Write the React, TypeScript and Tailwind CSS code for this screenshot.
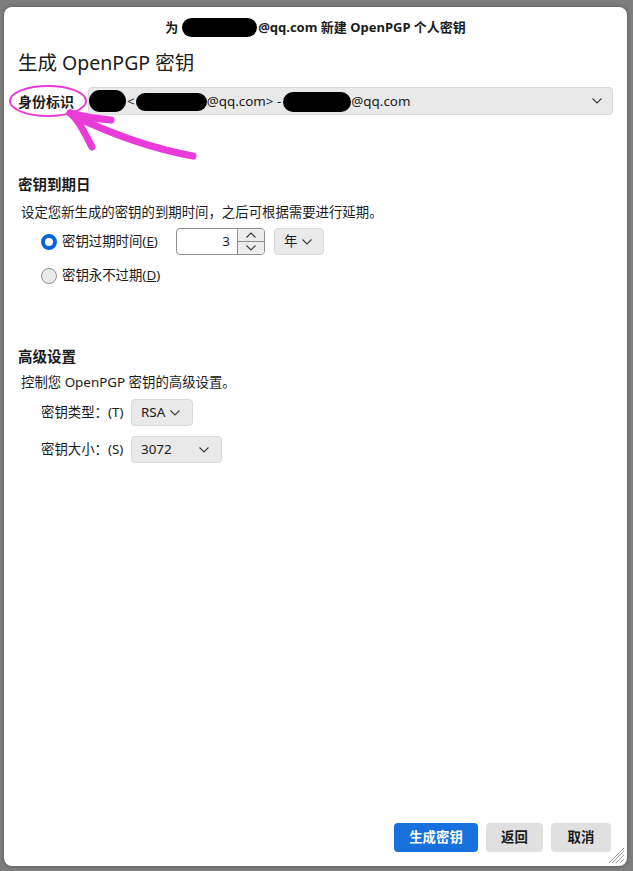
import React from "react";

function Chevron({ className = "" }: { className?: string }) {
  return (
    <svg width="10" height="6" viewBox="0 0 10 6" className={className}>
      <path d="M0.5 0.5 L5 5 L9.5 0.5" fill="none" stroke="#3a3a3a" strokeWidth="1.1" />
    </svg>
  );
}

function Blob({ w, h }: { w: number; h: number }) {
  return (
    <span
      className="inline-block rounded-full bg-black align-middle"
      style={{ width: w, height: h }}
    />
  );
}

export default function App() {
  return (
    <div className="relative h-[871px] w-[633px] overflow-hidden bg-[#7e7e7e] pb-[5px] pl-[4px] pr-[6px] pt-[7px] font-['Noto_Sans','Noto_Sans_CJK_SC',sans-serif] text-[13.4px] text-[#1b1b1b]">
      <div className="relative flex h-full flex-col rounded-[8px] bg-white shadow-[0_0_4px_rgba(0,0,0,0.35)]">
        {/* title bar */}
        <div className="flex h-[40px] items-center justify-center text-[13px] font-bold leading-[20px]">
          <span>为</span>
          <span className="ml-[4px] mr-[1px]">
            <Blob w={75} h={19} />
          </span>
          <span>@qq.com 新建 OpenPGP 个人密钥</span>
        </div>

        <div className="flex flex-1 flex-col px-[14px]">
          <h1 className="mt-[3px] text-[19.5px] font-normal leading-[26px]">生成 OpenPGP 密钥</h1>

          {/* identity */}
          <div className="mt-[11px] flex items-center">
            <span className="w-[70px] text-[14px] font-bold">身份标识</span>
            <div className="flex h-[28px] flex-1 items-center rounded-[4px] border border-[#d9d9d9] bg-[#e9e9e9] pr-[10px]">
              <Blob w={37} h={22} />
              <span className="ml-[1px]">&lt;</span>
              <span className="ml-[1px]">
                <Blob w={71} h={18} />
              </span>
              <span>@qq.com&gt; - </span>
              <span className="ml-[2px]">
                <Blob w={68} h={20} />
              </span>
              <span>@qq.com</span>
              <Chevron className="ml-auto" />
            </div>
          </div>

          {/* expiry */}
          <h2 className="mt-[59px] text-[14.5px] font-bold leading-[20px]">密钥到期日</h2>
          <p className="mt-[8px] pl-[3px] leading-[20px]">设定您新生成的密钥的到期时间，之后可根据需要进行延期。</p>

          <div className="mt-[6px] flex h-[27px] items-center pl-[23px]">
            <span className="h-[16px] w-[16px] rounded-full border-[4.5px] border-[#0b63d9] bg-white" />
            <span className="ml-[5px] w-[114px]">
              密钥过期时间(<span className="underline">E</span>)
            </span>
            <div className="flex h-[27px] w-[89px] overflow-hidden rounded-[4px] border border-[#8f8f8f] bg-white">
              <div className="flex flex-1 items-center justify-end pr-[7px]">3</div>
              <div className="flex w-[27px] flex-col border-l border-[#8f8f8f]">
                <div className="flex flex-1 items-center justify-center border-b border-[#8f8f8f] bg-[#ececec]">
                  <svg width="10" height="6" viewBox="0 0 10 6">
                    <path d="M0.5 5.5 L5 1 L9.5 5.5" fill="none" stroke="#3a3a3a" strokeWidth="1.1" />
                  </svg>
                </div>
                <div className="flex flex-1 items-center justify-center bg-[#ececec]">
                  <Chevron />
                </div>
              </div>
            </div>
            <div className="ml-[9px] flex h-[27px] w-[50px] items-center rounded-[4px] border border-[#d9d9d9] bg-[#e9e9e9] pl-[9px]">
              <span>年</span>
              <Chevron className="ml-[5px]" />
            </div>
          </div>

          <div className="mt-[7px] flex h-[27px] items-center pl-[23px]">
            <span className="h-[16px] w-[16px] rounded-full border border-[#8f8f8f] bg-[#e9e9e9]" />
            <span className="ml-[5px]">
              密钥永不过期(<span className="underline">D</span>)
            </span>
          </div>

          {/* advanced */}
          <h2 className="mt-[57px] text-[14.5px] font-bold leading-[20px]">高级设置</h2>
          <p className="mt-[6px] pl-[3px] leading-[20px]">控制您 OpenPGP 密钥的高级设置。</p>

          <div className="mt-[7px] flex h-[27px] items-center pl-[23px]">
            <span className="w-[90px]">密钥类型：(T)</span>
            <div className="flex h-[27px] w-[62px] items-center rounded-[4px] border border-[#d9d9d9] bg-[#e9e9e9] pl-[9px]">
              <span>RSA</span>
              <Chevron className="ml-[5px]" />
            </div>
          </div>
          <div className="mt-[10px] flex h-[27px] items-center pl-[23px]">
            <span className="w-[90px]">密钥大小：(S)</span>
            <div className="flex h-[27px] w-[91px] items-center rounded-[4px] border border-[#d9d9d9] bg-[#e9e9e9] pl-[9px] pr-[12px]">
              <span>3072</span>
              <Chevron className="ml-auto" />
            </div>
          </div>

          {/* buttons */}
          <div className="mt-auto flex justify-end gap-[8px] pb-[14px] pr-[2px] text-[13.4px] font-bold">
            <button className="h-[29px] w-[84px] rounded-[4px] bg-[#1770dc] text-white">生成密钥</button>
            <button className="h-[29px] w-[57px] rounded-[4px] bg-[#e0e0e0]">返回</button>
            <button className="h-[29px] w-[60px] rounded-[4px] bg-[#e0e0e0]">取消</button>
          </div>
        </div>

        {/* resize grip */}
        <svg className="absolute bottom-[2px] right-[2px]" width="16" height="16" viewBox="0 0 16 16">
          <path d="M15 3 L3 15 M15 7 L7 15 M15 11 L11 15 M15 0 L0 15" stroke="#9a9a9a" strokeWidth="1" />
        </svg>
      </div>

      {/* pink annotation drawn over the screenshot */}
      <svg className="pointer-events-none absolute left-0 top-0" width="633" height="871">
        <ellipse cx="48" cy="101" rx="38" ry="15" fill="none" stroke="#ea3bd9" strokeWidth="2" />
        <g fill="none" stroke="#ea3bd9" strokeWidth="7" strokeLinecap="round" strokeLinejoin="round">
          <path d="M193 156 C160 150 120 138 74 116" />
          <path d="M70 113 C80 122 84 132 92 147" />
          <path d="M70 113 C85 117 98 119 111 120" />
        </g>
      </svg>
    </div>
  );
}
